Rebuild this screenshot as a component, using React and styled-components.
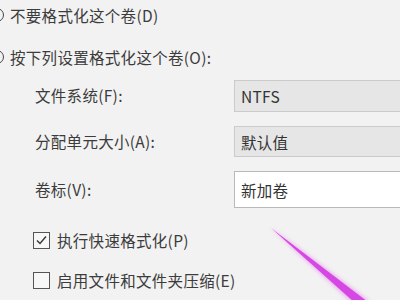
import React from "react";
import styled, { createGlobalStyle } from "styled-components";

const GlobalStyle = createGlobalStyle`
  html, body {
    margin: 0;
    padding: 0;
    background: #f2f2f2;
    overflow: hidden;
  }
  body {
    font-family: "Noto Sans CJK SC", "Liberation Sans", sans-serif;
    color: #3c3c3c;
  }
`;

const Page = styled.div`
  position: relative;
  width: 400px;
  height: 300px;
  overflow: hidden;
  font-size: 15.5px;
  letter-spacing: 0.3px;
`;

const RadioRow = styled.div`
  display: flex;
  align-items: center;
  gap: 6px;
  height: 30px;
  margin-left: -10px;
  margin-top: ${(p) => p.top || 0}px;
  white-space: nowrap;
`;

const Radio = styled.span`
  box-sizing: border-box;
  width: 14px;
  height: 14px;
  border-radius: 50%;
  border: 1px solid #444;
  display: flex;
  align-items: center;
  justify-content: center;
  flex-shrink: 0;

  &::after {
    content: "";
    width: 6px;
    height: 6px;
    border-radius: 50%;
    background: ${(p) => (p.checked ? "#333" : "transparent")};
  }
`;

const FieldList = styled.div`
  display: flex;
  flex-direction: column;
  gap: 14px;
  margin-top: 8px;
  margin-left: 35px;
`;

const FieldRow = styled.div`
  display: grid;
  grid-template-columns: 199px 220px;
  align-items: center;
  height: ${(p) => p.h}px;
  white-space: nowrap;
`;

const Label = styled.span`
  line-height: 1;
`;

const Field = styled.div`
  box-sizing: border-box;
  height: 100%;
  display: flex;
  align-items: center;
  padding-left: 6px;
  background: ${(p) => (p.editable ? "#ffffff" : "#e6e6e6")};
  border: 1px solid ${(p) => (p.editable ? "#b9b9b9" : "#cbcbcb")};
  color: #333;
`;

const CheckList = styled.div`
  display: flex;
  flex-direction: column;
  gap: 16px;
  margin-top: 20px;
  margin-left: 33px;
`;

const CheckRow = styled.div`
  display: flex;
  align-items: center;
  gap: 7px;
  height: 24px;
  white-space: nowrap;
`;

const Box = styled.span`
  box-sizing: border-box;
  width: 17px;
  height: 17px;
  border: 1px solid #555;
  background: #f7f7f7;
  display: flex;
  align-items: center;
  justify-content: center;
  flex-shrink: 0;
`;

const Arrow = styled.svg`
  position: absolute;
  left: 0;
  top: 0;
  pointer-events: none;
`;

const Checkbox = ({ checked, children }) => (
  <CheckRow>
    <Box>
      {checked && (
        <svg width="13" height="13" viewBox="0 0 13 13">
          <path d="M2 6.5 L5 9.5 L11 2.5" fill="none" stroke="#3a3a3a" strokeWidth="1.5" />
        </svg>
      )}
    </Box>
    <span>{children}</span>
  </CheckRow>
);

const App = () => (
  <>
    <GlobalStyle />
    <Page>
      <RadioRow>
        <Radio />
        <span>不要格式化这个卷(D)</span>
      </RadioRow>
      <RadioRow top={12}>
        <Radio checked />
        <span>按下列设置格式化这个卷(O):</span>
      </RadioRow>

      <FieldList>
        <FieldRow h={32}>
          <Label>文件系统(F):</Label>
          <Field>NTFS</Field>
        </FieldRow>
        <FieldRow h={31}>
          <Label>分配单元大小(A):</Label>
          <Field>默认值</Field>
        </FieldRow>
        <FieldRow h={37}>
          <Label>卷标(V):</Label>
          <Field editable>新加卷</Field>
        </FieldRow>
      </FieldList>

      <CheckList>
        <Checkbox checked>执行快速格式化(P)</Checkbox>
        <Checkbox>启用文件和文件夹压缩(E)</Checkbox>
      </CheckList>

      <Arrow width="400" height="300" viewBox="0 0 400 300">
        <defs>
          <filter id="glow" x="-20%" y="-20%" width="140%" height="140%">
            <feGaussianBlur stdDeviation="2" />
          </filter>
        </defs>
        <polygon points="270,227 352,302 370,302" fill="#e36cf0" opacity="0.6" filter="url(#glow)" />
        <polygon points="271,228 354,302 368,302" fill="#d648e3" />
      </Arrow>
    </Page>
  </>
);

export default App;
